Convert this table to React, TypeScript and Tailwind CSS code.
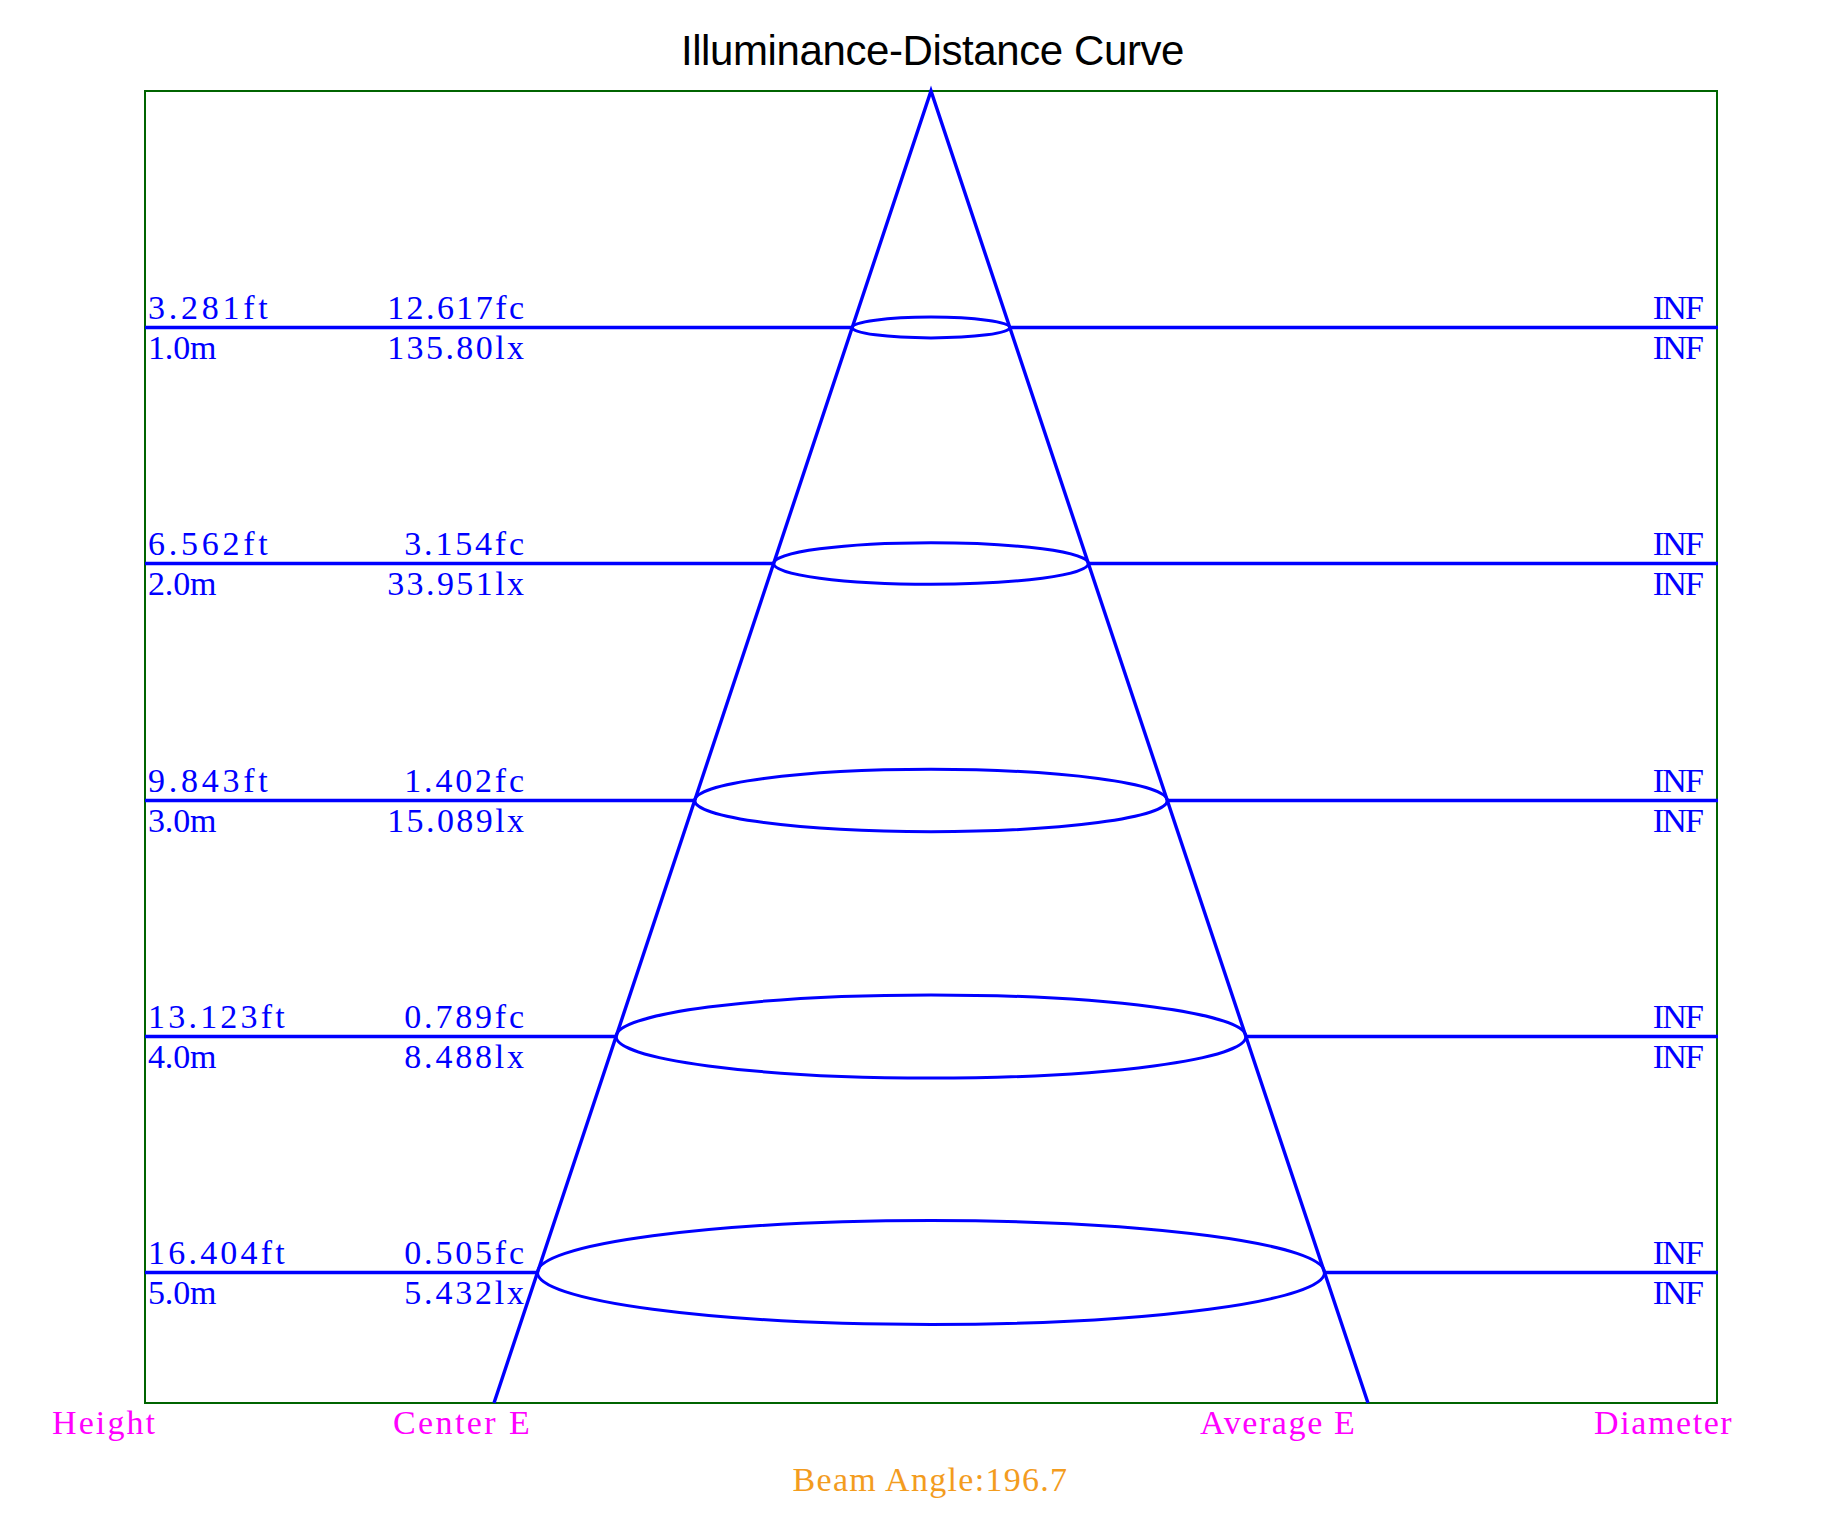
const TOP = 91;
const BOTTOM = 1403;
const LEFT = 145;
const RIGHT = 1717;
const CX = 931;
const SLOPE = (CX - 494) / (BOTTOM - TOP);
const CHAR = 17.1;

const rows = [
  { ft: "3.281ft", m: "1.0m", fc: "12.617fc", lx: "135.80lx" },
  { ft: "6.562ft", m: "2.0m", fc: "3.154fc", lx: "33.951lx" },
  { ft: "9.843ft", m: "3.0m", fc: "1.402fc", lx: "15.089lx" },
  { ft: "13.123ft", m: "4.0m", fc: "0.789fc", lx: "8.488lx" },
  { ft: "16.404ft", m: "5.0m", fc: "0.505fc", lx: "5.432lx" },
];

const BLUE = "#0000ff";
const SERIF = "Liberation Serif, Times New Roman, serif";

function Label({ x, y, text, end }: { x: number; y: number; text: string; end?: boolean }) {
  return (
    <text
      x={x}
      y={y}
      fill={BLUE}
      fontFamily={SERIF}
      fontSize={34}
      textAnchor={end ? "end" : "start"}
      textLength={CHAR * text.length}
      lengthAdjust="spacing"
    >
      {text}
    </text>
  );
}

function Chart() {
  const bottomHalf = SLOPE * (BOTTOM - TOP);
  return (
    <svg width={1821} height={1326} viewBox="0 80 1821 1326" className="block">
      {/* frame */}
      <rect x={LEFT} y={TOP} width={RIGHT - LEFT} height={BOTTOM - TOP} fill="none" stroke="#006400" strokeWidth={2} />

      {/* cone */}
      <polyline
        points={`${CX - bottomHalf},${BOTTOM} ${CX},${TOP} ${CX + bottomHalf},${BOTTOM}`}
        fill="none"
        stroke={BLUE}
        strokeWidth={3.4}
      />

      {rows.map((r, i) => {
        const y = Math.round(327 + 236.25 * i) + 0.5;
        const rx = SLOPE * (y - TOP);
        const ry = rx * 0.132;
        return (
          <g key={r.ft}>
            <line x1={LEFT} y1={y} x2={CX - rx} y2={y} stroke={BLUE} strokeWidth={3.6} />
            <line x1={CX + rx} y1={y} x2={RIGHT + 1} y2={y} stroke={BLUE} strokeWidth={3.6} />
            <ellipse cx={CX} cy={y} rx={rx} ry={ry} fill="none" stroke={BLUE} strokeWidth={3} />
            <Label x={148} y={y - 9} text={r.ft} />
            <Label x={148} y={y + 31} text={r.m} />
            <Label x={524} y={y - 9} text={r.fc} end />
            <Label x={524} y={y + 31} text={r.lx} end />
            <Label x={1704} y={y - 9} text="INF" end />
            <Label x={1704} y={y + 31} text="INF" end />
          </g>
        );
      })}
    </svg>
  );
}

export default function App() {
  return (
    <div className="w-[1821px] h-[1519px] bg-white overflow-hidden">
      {/* Title, centred over the plot */}
      <div className="h-[80px] pt-[30px] pl-[44px]">
        <h1 className="text-center text-[42px] leading-[42px] text-black font-['Liberation_Sans',Arial,sans-serif] tracking-[-0.4px]">
          Illuminance-Distance Curve
        </h1>
      </div>

      <Chart />

      {/* Axis captions */}
      <div className="flex h-[34px] text-[34px] leading-[34px] text-[#ff00ff] font-['Liberation_Serif','Times_New_Roman',serif] whitespace-nowrap">
        <div className="w-[393px] pl-[52px] tracking-[2.1px]">Height</div>
        <div className="w-[807px] tracking-[2.4px]">Center E</div>
        <div className="w-[394px] tracking-[1.6px]">Average E</div>
        <div className="tracking-[1.6px]">Diameter</div>
      </div>

      {/* Beam angle */}
      <div className="mt-[23px] h-[34px] pl-[40px] text-center text-[34px] leading-[34px] text-[#f39c1e] font-['Liberation_Serif','Times_New_Roman',serif] tracking-[1.3px]">
        Beam Angle:196.7
      </div>
    </div>
  );
}
